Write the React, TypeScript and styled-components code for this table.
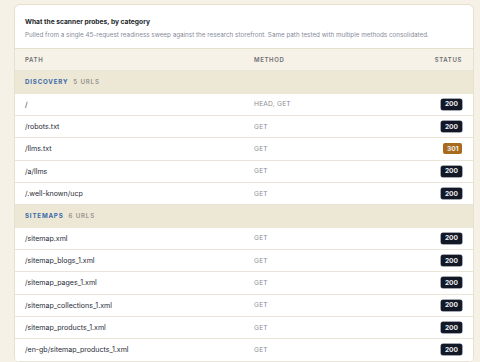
import styled, { createGlobalStyle } from "styled-components";

const GlobalStyle = createGlobalStyle`
  html, body {
    margin: 0;
    background: #f5f1e6;
  }
  body {
    padding: 4px 6px 0 14px;
    font-family: Inter, "Noto Sans", sans-serif;
    -webkit-font-smoothing: antialiased;
  }
`;

const Card = styled.div`
  background: #ffffff;
  border: 1px solid #e7e0cd;
  border-radius: 6px;
  overflow: hidden;
`;

const CardHeader = styled.div`
  padding: 12px 11px 0 10px;
  height: 44px;
  box-sizing: border-box;
  border-bottom: 1px solid #e7e0cd;
`;

const Title = styled.div`
  font-size: 6.7px;
  font-weight: 700;
  color: #1b1f2a;
  line-height: 10px;
`;

const Subtitle = styled.div`
  margin-top: 4px;
  font-size: 6.3px;
  color: #878b9a;
  line-height: 9px;
  white-space: nowrap;
`;

const Row = styled.div<{ $variant?: "head" | "group" | "data" }>`
  display: grid;
  grid-template-columns: 229px 1fr auto;
  align-items: center;
  height: 21.33px;
  padding: 0 11px 0 10px;
  border-bottom: 1px solid
    ${(p) => (p.$variant === "group" ? "#ede7d6" : "#e9e4d7")};
  background: ${(p) =>
    p.$variant === "head" ? "#f6f2e7" : p.$variant === "group" ? "#ede7d6" : "#ffffff"};
`;

const HeadCell = styled.span<{ $right?: boolean }>`
  font-size: 6px;
  font-weight: 600;
  letter-spacing: 0.65px;
  color: #6e6e72;
  text-transform: uppercase;
  text-align: ${(p) => (p.$right ? "right" : "left")};
`;

const GroupLabel = styled.div`
  grid-column: 1 / -1;
  display: flex;
  gap: 5px;
  align-items: baseline;
  font-size: 6.2px;
  letter-spacing: 0.8px;
  text-transform: uppercase;
`;

const GroupName = styled.span`
  font-weight: 700;
  color: #3a6aa6;
`;

const GroupCount = styled.span`
  font-weight: 500;
  color: #85857f;
`;

const Path = styled.span`
  font-size: 7.05px;
  color: #2a2d38;
`;

const Method = styled.span`
  font-size: 6.65px;
  color: #8b8c96;
  letter-spacing: 0.2px;
`;

const Badge = styled.span<{ $tone: "ok" | "redirect" }>`
  justify-self: end;
  display: inline-flex;
  align-items: center;
  justify-content: center;
  height: 11px;
  padding: 0 ${(p) => (p.$tone === "ok" ? "4px" : "3.5px")};
  border-radius: 2px;
  font-size: 6.6px;
  font-weight: 700;
  color: #eef0f4;
  background: ${(p) => (p.$tone === "ok" ? "#121826" : "#a86b1d")};
  box-shadow: ${(p) => (p.$tone === "ok" ? "0 0 0 0.5px #4a5060" : "none")};
`;

type Probe = { path: string; method: string; status: number };

const groups: { name: string; probes: Probe[] }[] = [
  {
    name: "Discovery",
    probes: [
      { path: "/", method: "HEAD, GET", status: 200 },
      { path: "/robots.txt", method: "GET", status: 200 },
      { path: "/llms.txt", method: "GET", status: 301 },
      { path: "/a/llms", method: "GET", status: 200 },
      { path: "/.well-known/ucp", method: "GET", status: 200 },
    ],
  },
  {
    name: "Sitemaps",
    probes: [
      { path: "/sitemap.xml", method: "GET", status: 200 },
      { path: "/sitemap_blogs_1.xml", method: "GET", status: 200 },
      { path: "/sitemap_pages_1.xml", method: "GET", status: 200 },
      { path: "/sitemap_collections_1.xml", method: "GET", status: 200 },
      { path: "/sitemap_products_1.xml", method: "GET", status: 200 },
      { path: "/en-gb/sitemap_products_1.xml", method: "GET", status: 200 },
    ],
  },
];

export default function App() {
  return (
    <>
      <GlobalStyle />
      <Card>
        <CardHeader>
          <Title>What the scanner probes, by category</Title>
          <Subtitle>
            Pulled from a single 45-request readiness sweep against the research storefront. Same path tested
            with multiple methods consolidated.
          </Subtitle>
        </CardHeader>
        <Row $variant="head">
          <HeadCell>Path</HeadCell>
          <HeadCell>Method</HeadCell>
          <HeadCell $right>Status</HeadCell>
        </Row>
        {groups.map((g) => (
          <div key={g.name}>
            <Row $variant="group">
              <GroupLabel>
                <GroupName>{g.name}</GroupName>
                <GroupCount>{g.probes.length} URLs</GroupCount>
              </GroupLabel>
            </Row>
            {g.probes.map((p) => (
              <Row $variant="data" key={p.path}>
                <Path>{p.path}</Path>
                <Method>{p.method}</Method>
                <Badge $tone={p.status === 200 ? "ok" : "redirect"}>{p.status}</Badge>
              </Row>
            ))}
          </div>
        ))}
      </Card>
    </>
  );
}
